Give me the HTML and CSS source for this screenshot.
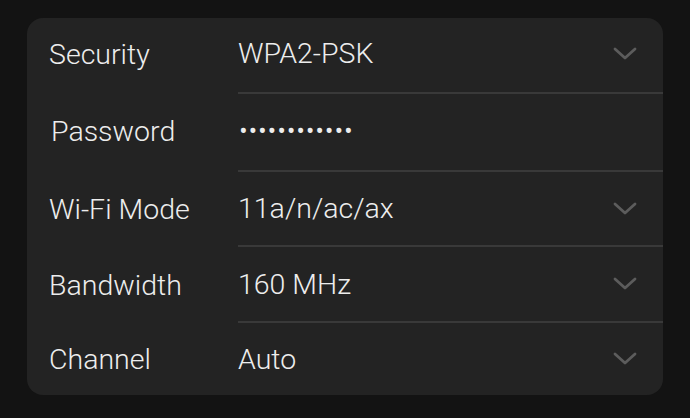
FILE: index.html
```html
<!DOCTYPE html>
<html lang="en">

<head>
    <meta charset="utf-8">
    <meta name="viewport" content="width=device-width, initial-scale=1.0">
    <link rel="stylesheet" href="styles.css">
</head>

<body>
    <div class="card">
        <div class="row row-security">
            <div class="label">Security</div>
            <div class="field">
                <span class="value">WPA2-PSK</span>
                <svg class="chevron" viewBox="0 0 24 14"><path d="M2 2 L12 11 L22 2" /></svg>
            </div>
        </div>
        <div class="row row-password">
            <div class="label label-pass">Password</div>
            <div class="field">
                <span class="value dots">••••••••••••</span>
            </div>
        </div>
        <div class="row row-mode">
            <div class="label">Wi-Fi Mode</div>
            <div class="field">
                <span class="value">11a/n/ac/ax</span>
                <svg class="chevron" viewBox="0 0 24 14"><path d="M2 2 L12 11 L22 2" /></svg>
            </div>
        </div>
        <div class="row row-band">
            <div class="label">Bandwidth</div>
            <div class="field">
                <span class="value">160 MHz</span>
                <svg class="chevron" viewBox="0 0 24 14"><path d="M2 2 L12 11 L22 2" /></svg>
            </div>
        </div>
        <div class="row last">
            <div class="label">Channel</div>
            <div class="field">
                <span class="value">Auto</span>
                <svg class="chevron" viewBox="0 0 24 14"><path d="M2 2 L12 11 L22 2" /></svg>
            </div>
        </div>
    </div>
</body>

</html>
```

FILE: styles.css
```css
/* fundo escuro da página */
body {
    margin: 0;
    background-color: #131313;
    font-family: Roboto, "Liberation Sans", sans-serif;
}

.card {
    margin: 18px 0 0 27px;
    width: 636px;
    background-color: #232323;
    border-radius: 16px;
    overflow: hidden;
}

.row {
    display: flex;
    height: 75px;
}

.row-security {
    height: 76px;
}

.row-security > *,
.row-password > * {
    padding-bottom: 3px;
}

.row-password {
    height: 78px;
}

.row-band {
    height: 76px;
}

.last {
    height: 72px;
}

.label {
    width: 211px;
    padding-left: 22px;
    box-sizing: border-box;
    display: flex;
    align-items: center;
    font-size: 28.5px;
    font-weight: 300;
    color: #ededed;
}

.label-pass {
    padding-left: 24px;
}

.field {
    flex: 1;
    display: flex;
    align-items: center;
    justify-content: space-between;
    padding-right: 26px;
    border-bottom: 2px solid #393939;
}

.last .field {
    border-bottom: none;
}

.value {
    font-size: 28.5px;
    font-weight: 300;
    color: #ededed;
}

.dots {
    font-size: 27px;
    letter-spacing: 0.8px;
    padding-left: 1px;
}

.chevron {
    width: 24px;
    height: 14px;
    fill: none;
    stroke: #5c5c5c;
    stroke-width: 2.8;
    stroke-linecap: round;
    stroke-linejoin: round;
}
```
